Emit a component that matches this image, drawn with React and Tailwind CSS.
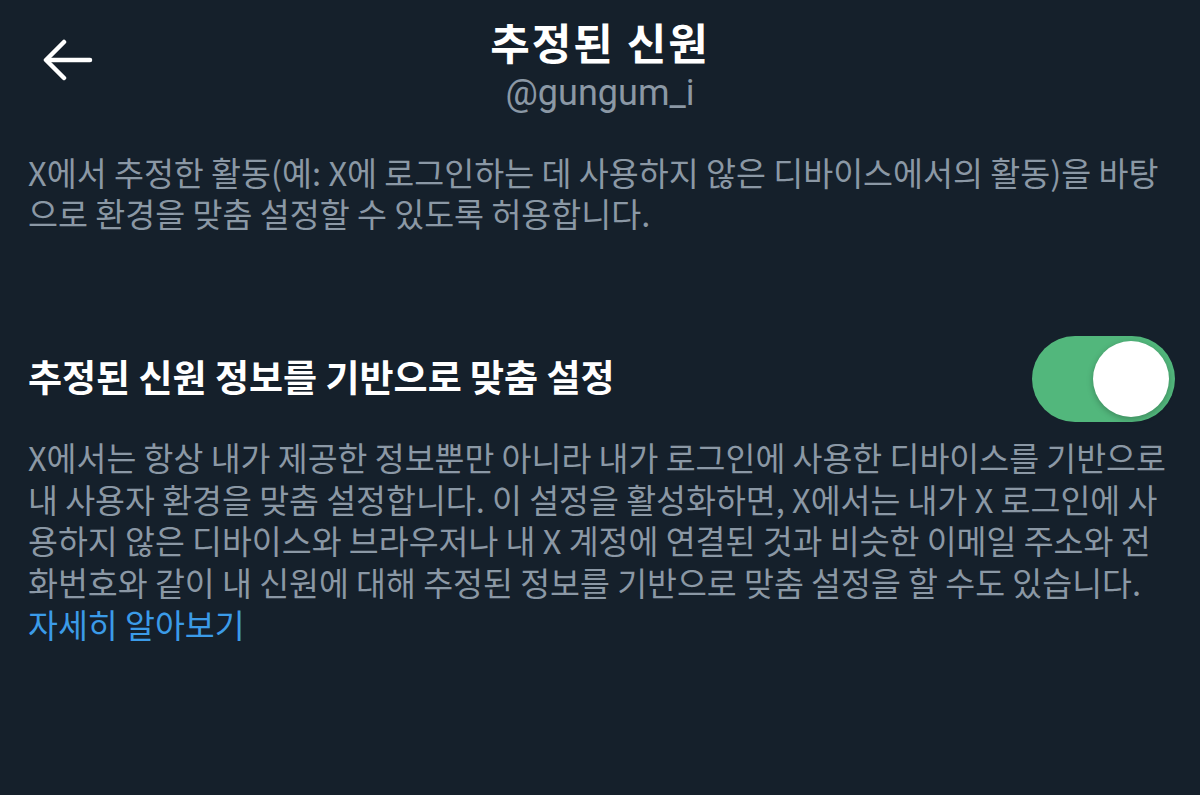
import React, { useState } from 'react';

const kr = { fontFamily: '"Noto Sans CJK KR", "Noto Sans", sans-serif' };

const BackArrow = () => (
  <svg width="52" height="42" viewBox="0 0 52 42" fill="none" stroke="white" strokeWidth="4.5" strokeLinecap="round" strokeLinejoin="round">
    <path d="M48 21H5" />
    <path d="M22 3L4 21l18 18" />
  </svg>
);

const Toggle = ({ on, onClick }) => (
  <button
    onClick={onClick}
    className={`relative w-[143px] h-[86px] rounded-full shrink-0 transition ${on ? 'bg-[#52b77c]' : 'bg-[#3a4450]'}`}
  >
    <span
      className={`absolute top-[5px] w-[76px] h-[76px] rounded-full bg-white shadow-[0_2px_6px_rgba(0,0,0,0.25)] transition-all ${on ? 'left-[61px]' : 'left-[6px]'}`}
    />
  </button>
);

const App = () => {
  const [enabled, setEnabled] = useState(true);

  return (
    <div className="min-h-screen bg-[#15202b] text-white" style={kr}>
      <header className="grid grid-cols-[1fr_auto_1fr] items-start pt-[15px] px-[28px]">
        <button className="mt-[24px] ml-[14px] w-fit">
          <BackArrow />
        </button>
        <div className="flex flex-col items-center">
          <h1 className="text-[43px] leading-[52px] font-bold tracking-[2px]">추정된 신원</h1>
          <p className="mt-[4px] text-[36px] leading-[44px] text-[#8b98a5]" style={{ fontFamily: 'Roboto, "Noto Sans", sans-serif' }}>
            @gungum_i
          </p>
        </div>
        <div />
      </header>

      <p className="mt-[36px] px-[28px] text-[32.6px] leading-[41px] text-[#8b98a5] whitespace-nowrap">
        X에서 추정한 활동(예: X에 로그인하는 데 사용하지 않은 디바이스에서의 활동)을 바탕
        <br />
        으로 환경을 맞춤 설정할 수 있도록 허용합니다.
      </p>

      <div className="mt-[103px] pl-[28px] pr-[25px] flex items-center justify-between">
        <h2 className="mb-[6px] text-[37px] leading-[46px] font-bold">추정된 신원 정보를 기반으로 맞춤 설정</h2>
        <Toggle on={enabled} onClick={() => setEnabled(v => !v)} />
      </div>

      <p className="mt-[14px] px-[28px] text-[32.5px] leading-[41.7px] text-[#8b98a5] whitespace-nowrap">
        X에서는 항상 내가 제공한 정보뿐만 아니라 내가 로그인에 사용한 디바이스를 기반으로
        <br />
        내 사용자 환경을 맞춤 설정합니다. 이 설정을 활성화하면, X에서는 내가 X 로그인에 사
        <br />
        용하지 않은 디바이스와 브라우저나 내 X 계정에 연결된 것과 비슷한 이메일 주소와 전
        <br />
        화번호와 같이 내 신원에 대해 추정된 정보를 기반으로 맞춤 설정을 할 수도 있습니다.
        <br />
        <a href="#" className="text-[#3b9be8]">자세히 알아보기</a>
      </p>
    </div>
  );
};

export default App;
